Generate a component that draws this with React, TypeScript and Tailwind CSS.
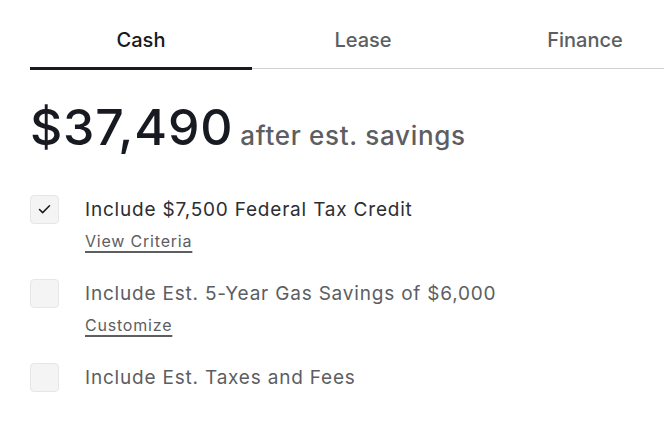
import React from "react";

const font = { fontFamily: "Inter, 'Noto Sans', sans-serif" };

function CheckRow({
  checked,
  label,
  link,
}: {
  checked?: boolean;
  label: string;
  link?: string;
}) {
  return (
    <div className="flex flex-col">
      <div className="flex items-center gap-[26px]">
        <div className="flex h-[29px] w-[29px] items-center justify-center rounded-[4px] border border-[#e6e6e6] bg-[#f4f4f4]">
          {checked && (
            <svg width="15" height="15" viewBox="0 0 24 24" fill="none" stroke="#171a20" strokeWidth="2.4" strokeLinecap="round" strokeLinejoin="round">
              <path d="M20 6 9 17l-5-5" />
            </svg>
          )}
        </div>
        <span className={`text-[19px] leading-[24px] tracking-[0.8px] ${checked ? "text-[#2b2e33]" : "text-[#5c5e62]"}`}>{label}</span>
      </div>
      {link && (
        <div className="pl-[55px] pt-[7px] text-[16px] leading-[20px]">
          <span className="text-[16px] leading-[20px] tracking-[0.8px] text-[#5c5e62] underline decoration-[#5c5e62] underline-offset-[4px] decoration-[1.5px]">
            {link}
          </span>
        </div>
      )}
    </div>
  );
}

export default function App() {
  return (
    <div className="h-[440px] w-[664px] overflow-hidden bg-white" style={font}>
      <div className="pl-[30px] pt-[27px]">
        <div className="relative flex w-[666px] border-b border-[#d0d1d2]">
          <div className="relative flex w-[222px] justify-center pb-[15px] text-[20px] font-medium leading-[26px] text-[#171a20]">
            Cash
            <div className="absolute bottom-[-2px] left-0 right-0 h-[3px] bg-[#171a20]" />
          </div>
          <div className="flex w-[222px] justify-center pb-[15px] text-[20px] font-medium leading-[26px] text-[#5c5e62]">
            Lease
          </div>
          <div className="flex w-[222px] justify-center pb-[15px] text-[20px] font-medium leading-[26px] text-[#5c5e62]">
            Finance
          </div>
        </div>
        <div className="mt-[30px] flex items-baseline gap-[7px]">
          <span className="text-[50px] font-medium leading-[56px] tracking-[0.8px] text-[#171a20]">$37,490</span>
          <span className="text-[26px] font-medium leading-[30px] tracking-[0.7px] text-[#5c5e62]">after est. savings</span>
        </div>
        <div className="mt-[40px] flex flex-col">
          <CheckRow checked label="Include $7,500 Federal Tax Credit" link="View Criteria" />
          <div className="h-[28px]" />
          <CheckRow label="Include Est. 5-Year Gas Savings of $6,000" link="Customize" />
          <div className="h-[28px]" />
          <CheckRow label="Include Est. Taxes and Fees" />
        </div>
      </div>
    </div>
  );
}
